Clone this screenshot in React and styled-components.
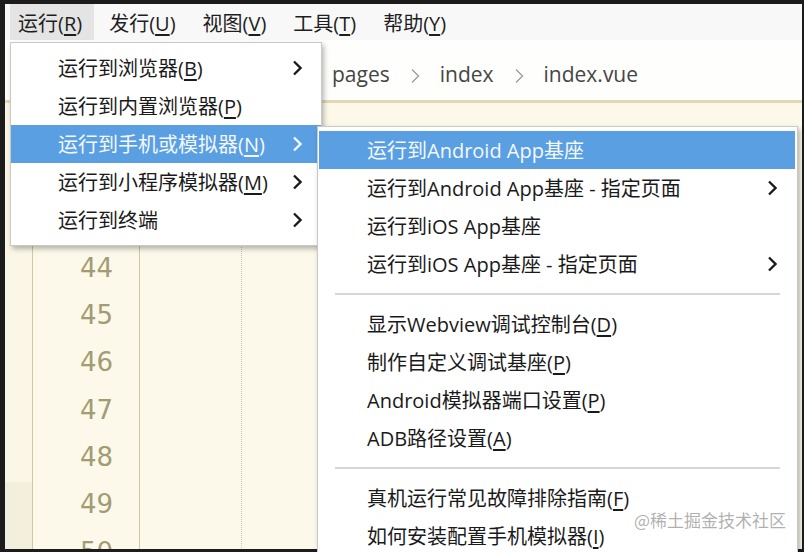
import styled, { createGlobalStyle } from "styled-components";

const GlobalStyle = createGlobalStyle`
  html, body {
    margin: 0;
    padding: 0;
    background: #1c1c1c;
  }
  * {
    box-sizing: border-box;
  }
`;

const UI_FONT = `"Open Sans", "Noto Sans CJK SC", sans-serif`;

const menuBarItems = [
  ["运行", "R"],
  ["发行", "U"],
  ["视图", "V"],
  ["工具", "T"],
  ["帮助", "Y"],
];

const runMenu = [
  { label: "运行到浏览器", key: "B", sub: true },
  { label: "运行到内置浏览器", key: "P" },
  { label: "运行到手机或模拟器", key: "N", sub: true, active: true },
  { label: "运行到小程序模拟器", key: "M", sub: true },
  { label: "运行到终端", sub: true },
];

const phoneMenu = [
  { label: "运行到Android App基座", active: true },
  { label: "运行到Android App基座 - 指定页面", sub: true },
  { label: "运行到iOS App基座" },
  { label: "运行到iOS App基座 - 指定页面", sub: true },
  { separator: true },
  { label: "显示Webview调试控制台", key: "D" },
  { label: "制作自定义调试基座", key: "P" },
  { label: "Android模拟器端口设置", key: "P" },
  { label: "ADB路径设置", key: "A" },
  { separator: true },
  { label: "真机运行常见故障排除指南", key: "F" },
  { label: "如何安装配置手机模拟器", key: "I" },
];

const lineNumbers = [41, 42, 43, 44, 45, 46, 47, 48, 49, 50];

function Chevron({ thin }) {
  return (
    <svg width="10" height="16" viewBox="0 0 10 16">
      <polyline
        points="2,1.5 8.5,8 2,14.5"
        fill="none"
        stroke={thin ? "#9a9a9a" : "currentColor"}
        strokeWidth={thin ? 1.3 : 2.3}
      />
    </svg>
  );
}

function Label({ label, mnemonic }) {
  return (
    <span>
      {label}
      {mnemonic && (
        <>
          (<u>{mnemonic}</u>)
        </>
      )}
    </span>
  );
}

function App() {
  return (
    <>
      <GlobalStyle />
      <Frame>
        <Window>
          <MenuBar>
            {menuBarItems.map(([label, key], i) => (
              <BarItem key={label} $open={i === 0}>
                <Label label={label} mnemonic={key} />
              </BarItem>
            ))}
          </MenuBar>

          <Breadcrumb>
            <Crumb>pages</Crumb>
            <Chevron thin />
            <Crumb>index</Crumb>
            <Chevron thin />
            <Crumb>index.vue</Crumb>
          </Breadcrumb>

          <Editor>
            <Gutter>
              <GutterShade />
            </Gutter>
            <LineNumbers>
              {lineNumbers.map((n) => (
                <LineNo key={n}>{n}</LineNo>
              ))}
            </LineNumbers>
            <Code>
              <IndentGuide />
            </Code>
          </Editor>
        </Window>

        <RunMenu>
          {runMenu.map((item) => (
            <MenuItem key={item.label} $active={item.active} $padLeft={47} $padRight={19}>
              <Label label={item.label} mnemonic={item.key} />
              {item.sub && <Chevron />}
            </MenuItem>
          ))}
        </RunMenu>

        <PhoneMenu>
          {phoneMenu.map((item, i) =>
            item.separator ? (
              <Separator key={"sep" + i} />
            ) : (
              <MenuItem key={i} $active={item.active} $padLeft={48} $padRight={18} $inset>
                <Label label={item.label} mnemonic={item.key} />
                {item.sub && <Chevron />}
              </MenuItem>
            )
          )}
        </PhoneMenu>

        <Watermark>@稀土掘金技术社区</Watermark>
      </Frame>
    </>
  );
}

export default App;

const Frame = styled.div`
  position: relative;
  width: 804px;
  height: 552px;
  padding: 4px 2px 3px 5px;
  background: #1c1c1c;
  overflow: hidden;
`;

const Window = styled.div`
  display: flex;
  flex-direction: column;
  height: 100%;
  background: #fdf9ea;
  overflow: hidden;
`;

const MenuBar = styled.div`
  flex-shrink: 0;
  display: flex;
  align-items: stretch;
  height: 36px;
  padding-left: 5px;
  gap: 7px;
  background: #f8f8f8;
  font-family: ${UI_FONT};
  font-size: 20px;
  color: #1e1e1e;
`;

const BarItem = styled.div`
  display: flex;
  align-items: center;
  padding: 0 12px 0 8px;
  background: ${(p) => (p.$open ? "#e4e4e4" : "transparent")};

  u {
    text-underline-offset: 3px;
  }
`;

const Breadcrumb = styled.div`
  flex-shrink: 0;
  display: flex;
  align-items: center;
  gap: 20px;
  height: 63px;
  padding: 11px 0 0 327px;
  background: #fefefd;
  border-bottom: 3px solid #e2d9b4;
  font-family: ${UI_FONT};
  font-size: 21px;
  color: #454545;
`;

const Crumb = styled.span`
  line-height: 1;
  padding-bottom: 2px;
`;

const Editor = styled.div`
  flex: 1;
  min-height: 0;
  overflow: hidden;
  display: grid;
  grid-template-columns: 28px 107px 1fr;
`;

const Gutter = styled.div`
  position: relative;
  background: #fbf7e7;
  border-right: 1px solid #cfc8a2;
`;

const GutterShade = styled.div`
  position: absolute;
  left: 0;
  right: 0;
  top: 379px;
  bottom: 0;
  background: #f2efdd;
`;

const LineNumbers = styled.div`
  display: flex;
  flex-direction: column;
  align-items: flex-end;
  padding-right: 26px;
  border-right: 1px solid #cfc8a2;
  font-family: "DejaVu Sans", sans-serif;
  font-size: 26px;
  color: #a39b74;
`;

const LineNo = styled.div`
  height: 47.3px;
  line-height: 47.3px;
  flex-shrink: 0;
`;

const Code = styled.div`
  padding-left: 101px;
`;

const IndentGuide = styled.div`
  height: 100%;
  border-left: 1px dotted #c9c3a3;
`;

const Menu = styled.div`
  position: absolute;
  display: flex;
  flex-direction: column;
  background: #ffffff;
  border: 1px solid #c9c9c9;
  box-shadow: 2px 3px 5px rgba(0, 0, 0, 0.28);
  font-family: ${UI_FONT};
  font-size: 20px;
  color: #1a1a1a;
`;

const RunMenu = styled(Menu)`
  left: 10px;
  top: 42px;
  width: 312px;
  padding: 6px 0;
`;

const PhoneMenu = styled(Menu)`
  left: 317px;
  top: 126px;
  width: 481px;
  padding: 4px 0 40px;
`;

const MenuItem = styled.div`
  display: flex;
  align-items: center;
  justify-content: space-between;
  height: 38px;
  margin: ${(p) => (p.$inset ? "0 2px 0 1px" : "0")};
  padding: 0 ${(p) => p.$padRight}px 0 ${(p) => p.$padLeft}px;
  background: ${(p) => (p.$active ? "#5a9fe2" : "transparent")};
  color: ${(p) => (p.$active ? "#f4f8fd" : "inherit")};
  white-space: nowrap;

  span {
    padding-bottom: 2px;
  }

  u {
    text-underline-offset: 3px;
  }
`;

const Separator = styled.div`
  height: 22px;
  margin: 0 17px;
  display: flex;
  align-items: center;

  &::after {
    content: "";
    flex: 1;
    height: 2px;
    background: #d6d6d6;
  }
`;

const Watermark = styled.div`
  position: absolute;
  right: 18px;
  bottom: 20px;
  font-family: "Noto Sans CJK SC", sans-serif;
  font-size: 17px;
  color: rgba(150, 150, 150, 0.75);
  pointer-events: none;
`;
